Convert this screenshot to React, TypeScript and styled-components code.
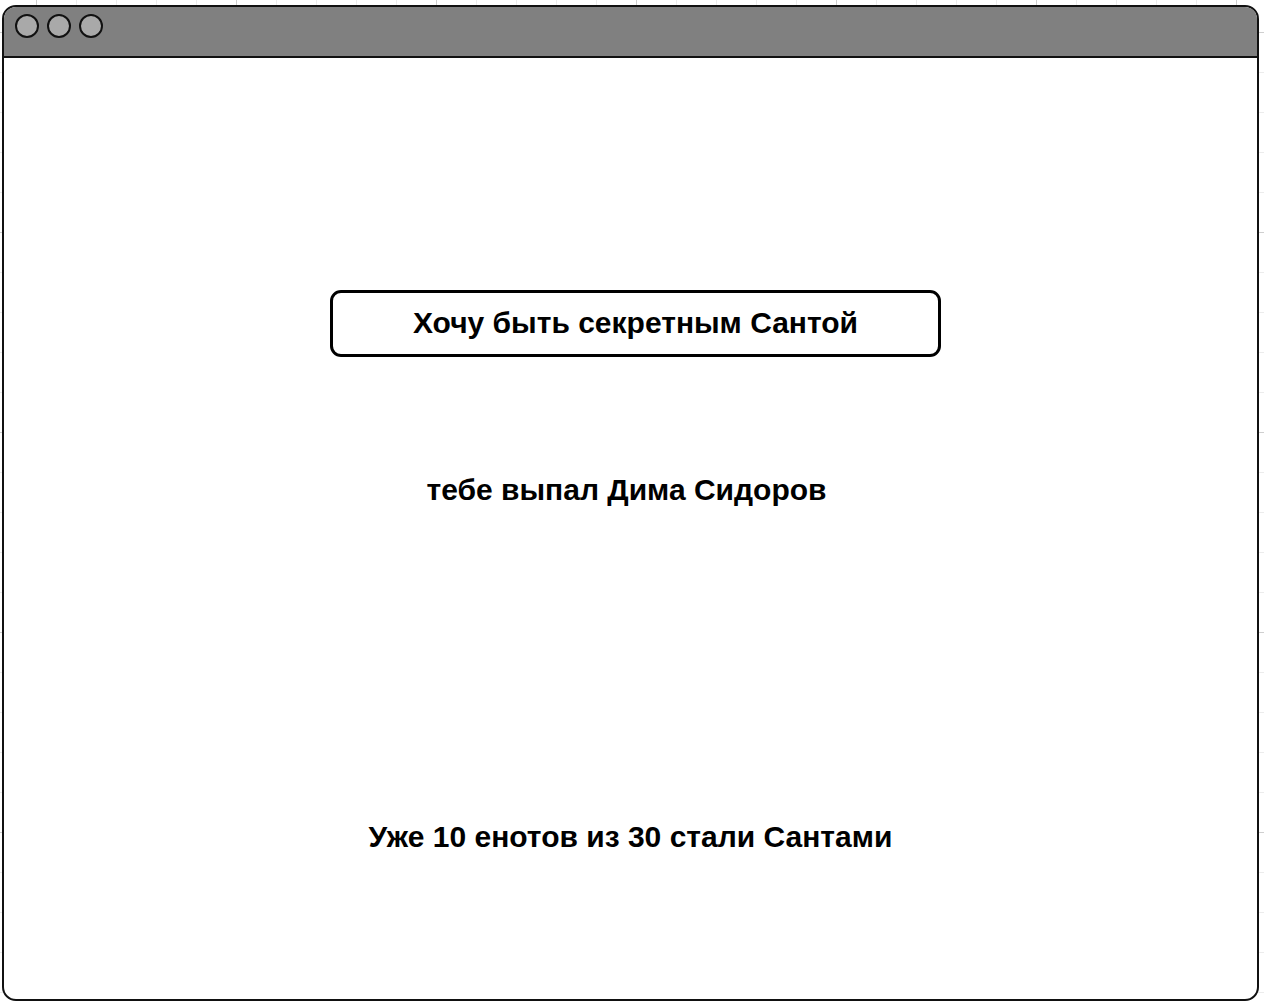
import styled, { createGlobalStyle } from "styled-components";

/* ===========================
   Styled
   =========================== */
const Global = createGlobalStyle`
  html, body {
    margin: 0;
    padding: 0;
  }
  body {
    font-family: "Liberation Sans", Arial, sans-serif;
    background-color: #fff;
    background-image:
      linear-gradient(to right, #cfcfcf 1px, transparent 1px),
      linear-gradient(to bottom, #cfcfcf 1px, transparent 1px),
      linear-gradient(to right, #ececec 1px, transparent 1px),
      linear-gradient(to bottom, #ececec 1px, transparent 1px);
    background-size: 200px 200px, 200px 200px, 40px 40px, 40px 40px;
    background-position: 36px 32px;
  }
`;

const Page = styled.div`
  width: 1264px;
  height: 1001px;
  padding: 5px 5px 4px 2px;
  box-sizing: border-box;
`;

const Window = styled.div`
  height: 100%;
  border: 2px solid #111;
  border-radius: 14px;
  background: #fff;
  overflow: hidden;
  display: flex;
  flex-direction: column;
`;

const TitleBar = styled.div`
  height: 51px;
  background: #808080;
  border-bottom: 2px solid #111;
  display: flex;
  align-items: flex-start;
  gap: 8px;
  padding: 7px 0 0 11px;
  box-sizing: border-box;
`;

const Dot = styled.span`
  width: 24px;
  height: 24px;
  border-radius: 50%;
  background: #a9a9a9;
  border: 2px solid #111;
  box-sizing: border-box;
`;

const Body = styled.div`
  flex: 1;
  display: flex;
  flex-direction: column;
  align-items: center;
  padding-top: 232px;
`;

const SantaButton = styled.button`
  width: 611px;
  height: 67px;
  border: 3px solid #000;
  border-radius: 11px;
  background: #fff;
  font-family: "Liberation Sans", Arial, sans-serif;
  font-weight: 700;
  font-size: 30px;
  color: #000;
  cursor: pointer;
  margin-left: 10px;
  padding: 0 0 2px;
`;

const Line = styled.p<{ $top: number; $shift?: number }>`
  margin: ${(p) => p.$top}px 0 0 ${(p) => p.$shift ?? 0}px;
  font-size: 30px;
  font-weight: 700;
  line-height: 32px;
  color: #000;
`;

/* ===========================
   Component
   =========================== */
export default function App() {
  return (
    <Page>
      <Global />
      <Window>
        <TitleBar>
          <Dot />
          <Dot />
          <Dot />
        </TitleBar>
        <Body>
          <SantaButton>Хочу быть секретным Сантой</SantaButton>
          <Line $top={117} $shift={-8}>тебе выпал Дима Сидоров</Line>
          <Line $top={315}>Уже 10 енотов из 30 стали Сантами</Line>
        </Body>
      </Window>
    </Page>
  );
}
